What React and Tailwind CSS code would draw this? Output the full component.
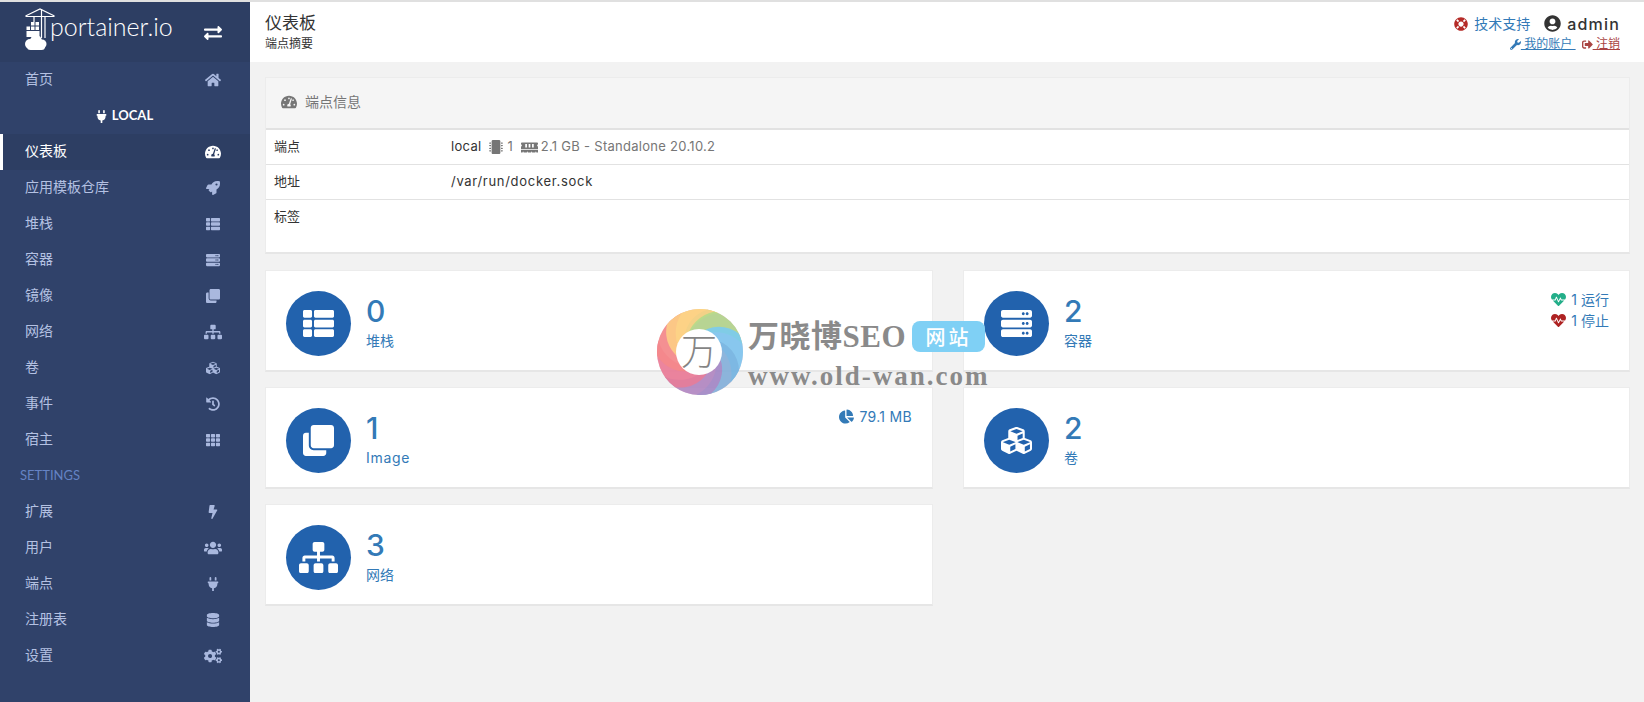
import React from 'react';
import { FaHome, FaPlug, FaTachometerAlt, FaRocket, FaThList, FaServer, FaClone, FaSitemap, FaCubes, FaHistory, FaTh, FaBolt, FaUsers, FaDatabase, FaCogs, FaExchangeAlt, FaLifeRing, FaUserCircle, FaWrench, FaSignOutAlt, FaMicrochip, FaMemory, FaHeartbeat, FaChartPie } from 'react-icons/fa';

const cjk = "font-['Inter','Noto_Sans_CJK_SC',sans-serif]";

function NavItem({ label, Icon, active, size = 'text-[14px]' }) {
  return (
    <div className={`flex h-9 items-center justify-between pr-[28px] text-sm ${active ? 'border-l-[3px] border-white bg-[#2d3e63] pl-[22px] text-white' : 'pl-[25px] text-[#b4c1e2]'}`}>
      <span className="pb-[2px]">{label}</span>
      <span className={`flex w-[18px] justify-center ${size} ${active ? 'text-white' : 'text-[#a9b8de]'}`}><Icon /></span>
    </div>
  );
}

function Logo() {
  return (
    <svg width="32" height="44" viewBox="0 0 32 44" className="shrink-0">
      <g stroke="#fff" fill="none" strokeWidth="1.2">
        <path d="M0.5 8 L15 1 L29.5 8 M0.5 8.5 H29.5" />
        <path d="M16.5 1 V30 M20 8.5 V30" />
        <path d="M9 8.5 V14" />
      </g>
      <g fill="#fff">
        <rect x="6" y="14" width="3.5" height="3.5" />
        <rect x="10.5" y="14" width="3.5" height="3.5" />
        <rect x="1.5" y="18.5" width="3.5" height="3.5" />
        <rect x="6" y="18.5" width="3.5" height="3.5" />
        <rect x="10.5" y="18.5" width="3.5" height="3.5" />
        <rect x="1.5" y="23" width="13" height="6" />
        <circle cx="5" cy="36" r="5" />
        <circle cx="11" cy="33" r="6" />
        <circle cx="17" cy="36" r="4.5" />
        <rect x="2" y="35" width="18" height="7" rx="3.5" />
      </g>
    </svg>
  );
}

function Sidebar() {
  return (
    <aside className="flex w-[250px] shrink-0 flex-col bg-[#30426a] font-['Lato','Noto_Sans_CJK_SC',sans-serif]">
      <div className="flex h-[60px] items-start justify-between bg-[#2d3e63] pt-[6px] pl-[25px] pr-[28px]">
        <div className="flex items-start">
          <Logo />
          <span className="-ml-[7px] mt-[3px] font-['Lato',sans-serif] text-[25px] leading-[30px] font-light text-white">portainer.io</span>
        </div>
        <span className="mt-[16px] flex w-[18px] justify-center text-[18px] text-white"><FaExchangeAlt /></span>
      </div>
      <NavItem label="首页" Icon={FaHome} size="text-[16px]" />
      <div className="flex h-9 items-center justify-center gap-1 pr-[2px] text-[13px] font-bold text-white"><FaPlug className="text-[13px]" /><span>LOCAL</span></div>
      <NavItem label="仪表板" Icon={FaTachometerAlt} size="text-[16px]" active />
      <NavItem label="应用模板仓库" Icon={FaRocket} />
      <NavItem label="堆栈" Icon={FaThList} />
      <NavItem label="容器" Icon={FaServer} />
      <NavItem label="镜像" Icon={FaClone} />
      <NavItem label="网络" Icon={FaSitemap} size="text-[18px]" />
      <NavItem label="卷" Icon={FaCubes} />
      <NavItem label="事件" Icon={FaHistory} />
      <NavItem label="宿主" Icon={FaTh} />
      <div className="flex h-9 items-center pl-[20px] text-[13px] text-[#6583c4]">SETTINGS</div>
      <NavItem label="扩展" Icon={FaBolt} />
      <NavItem label="用户" Icon={FaUsers} size="text-[18px]" />
      <NavItem label="端点" Icon={FaPlug} />
      <NavItem label="注册表" Icon={FaDatabase} />
      <NavItem label="设置" Icon={FaCogs} size="text-[18px]" />
    </aside>
  );
}

function Header() {
  return (
    <header className="flex h-[60px] justify-between bg-white pl-[15px] pr-[24px]">
      <div className="pt-[10px]">
        <div className="text-[17px] leading-[22px] text-[#333]">仪表板</div>
        <div className="mt-[3px] text-[12px] leading-[14px] text-[#333]">端点摘要</div>
      </div>
      <div className="flex flex-col items-end pt-[10px]">
        <div className="flex h-[23px] items-center">
          <FaLifeRing className="text-[14px] text-[#b52b27]" />
          <span className="ml-[6px] text-[14px] text-[#337ab7]">技术支持</span>
          <FaUserCircle className="ml-[14px] text-[17px] text-[#333]" />
          <span className="ml-[6px] text-[16px] font-medium tracking-[1.2px] text-[#333]">admin</span>
        </div>
        <div className="flex h-[18px] items-center text-[12px]">
          <FaWrench className="text-[11px] text-[#337ab7]" />
          <span className="text-[#337ab7] underline">&nbsp;我的账户&nbsp;</span>
          <FaSignOutAlt className="ml-[6px] text-[11px] text-[#a94442]" />
          <span className="text-[#a94442] underline">&nbsp;注销</span>
        </div>
      </div>
    </header>
  );
}

function InfoRow({ label, children, tall }) {
  return (
    <div className={`flex border-t border-[#e2e2e2] pl-2 text-[13px] ${tall ? 'h-[53px] items-start pt-[7px]' : 'h-[35px] items-center'}`}>
      <div className="w-[177px] text-[#333]">{label}</div>
      <div className="flex items-center text-[#333]">{children}</div>
    </div>
  );
}

function InfoPanel() {
  return (
    <section className="border border-[#ececec] border-b-2 border-b-[#e6e6e6] bg-white">
      <div className="flex h-[51px] items-center border-b border-[#e2e2e2] bg-[#f5f5f5] pb-[2px] pl-[15px] text-sm text-[#767676]">
        <FaTachometerAlt className="text-[16px]" />
        <span className="ml-2">端点信息</span>
      </div>
      <InfoRow label="端点">
        <span className="tracking-[0.3px]">local</span>
        <span className="ml-[8px] flex items-center text-[#767676]">
          <FaMicrochip className="text-[14px]" /><span className="ml-[4px]">1</span>
          <FaMemory className="ml-[8px] text-[17px]" /><span className="ml-[3px] tracking-[0.28px]">2.1 GB - Standalone 20.10.2</span>
        </span>
      </InfoRow>
      <InfoRow label="地址"><span className="tracking-[0.7px]">/var/run/docker.sock</span></InfoRow>
      <InfoRow label="标签" tall />
    </section>
  );
}

function Card({ Icon, value, label, iconSize = 'text-[31px]', children }) {
  return (
    <div className="relative flex h-[102px] items-start border border-[#ececec] border-b-2 border-b-[#e6e6e6] bg-white pt-5 pl-5">
      <div className={`flex h-[65px] w-[65px] items-center justify-center rounded-full bg-[#2262ad] text-white ${iconSize}`}><Icon /></div>
      <div className="mt-[4px] ml-[15px] text-[#337ab7]">
        <div className="text-[30px] leading-[32px] font-medium">{value}</div>
        <div className="mt-[5px] text-[14px] leading-[18px]">{label}</div>
      </div>
      {children}
    </div>
  );
}

function polar(r, deg) {
  const a = (deg * Math.PI) / 180;
  return `${(44 + r * Math.cos(a)).toFixed(2)} ${(44 + r * Math.sin(a)).toFixed(2)}`;
}

function blade(center) {
  const a = center - 100;
  return `M${polar(18, a)} A32 32 0 0 1 ${polar(43, center - 30)} A43 43 0 0 1 ${polar(43, center + 40)} A36 36 0 0 0 ${polar(18, a + 70)} Z`;
}

function Watermark() {
  const blades = [
    ['#fde36a', -105], ['#a6d67e', -50], ['#68c6f4', 5], ['#6faedd', 55], ['#a67cc0', 105], ['#ea6f8c', 155], ['#f47c7c', 205], ['#fdcb7a', 250],
  ];
  return (
    <div className="pointer-events-none absolute top-[306px] left-[656px] flex items-start">
      <svg width="88" height="88" viewBox="0 0 88 88" className="shrink-0 opacity-90">
        <circle cx="44" cy="44" r="43" fill="#e8b0c0" />
        {blades.map(([c, a]) => <path key={a} d={blade(a)} fill={c} opacity="0.85" />)}
        <circle cx="43" cy="44" r="23" fill="#fff" />
        <text x="43" y="57" textAnchor="middle" fontSize="36" fontWeight="300" fill="#777" fontFamily="'Noto Sans CJK SC',serif">万</text>
      </svg>
      <div className="ml-[4px] font-['Liberation_Serif','Noto_Sans_CJK_SC',serif] font-bold text-[#8a8a8a]">
        <div className="mt-[13px] flex h-[31px] items-center">
          <span className="text-[31px] leading-[31px] tracking-[0.5px]">万晓博SEO</span>
          <span className="ml-[6px] flex h-[31px] w-[73px] items-center justify-center rounded-lg bg-[#7fd0f5] font-['Noto_Sans_CJK_SC',sans-serif] text-[20px] font-medium tracking-[3px] text-white">网站</span>
        </div>
        <div className="mt-[8px] text-[27px] leading-[32px] tracking-[2px]">www.old-wan.com</div>
      </div>
    </div>
  );
}

export default function App() {
  return (
    <div className={`relative flex h-[702px] w-full overflow-hidden border-t-2 border-[#e0e0e0] bg-[#f2f2f2] ${cjk}`}>
      <Sidebar />
      <main className="min-w-0 flex-1">
        <Header />
        <div className="pt-[15px] pr-[14px] pl-[15px]">
          <InfoPanel />
          <div className="mt-[16px] grid grid-cols-[668px_667px] gap-x-[30px] gap-y-[15px]">
            <Card Icon={FaThList} value="0" label="堆栈" />
            <Card Icon={FaServer} value="2" label="容器">
              <div className="absolute top-[18px] right-[20px] text-[14px] leading-[21px] text-[#337ab7]">
                <div className="flex items-center"><FaHeartbeat className="mr-[5px] text-[15px] text-[#23ae89]" />1 运行</div>
                <div className="flex items-center"><FaHeartbeat className="mr-[5px] text-[15px] text-[#ae2323]" />1 停止</div>
              </div>
            </Card>
            <Card Icon={FaClone} value="1" label={<span className="tracking-[0.7px]">Image</span>}>
              <div className="absolute top-[18px] right-[20px] flex items-center text-[14px] leading-[21px] tracking-[0.3px] text-[#337ab7]"><FaChartPie className="mr-[6px] text-[15px]" />79.1 MB</div>
            </Card>
            <Card Icon={FaCubes} value="2" label="卷" />
            <Card Icon={FaSitemap} iconSize="text-[39px]" value="3" label="网络" />
          </div>
        </div>
      </main>
      <Watermark />
    </div>
  );
}
